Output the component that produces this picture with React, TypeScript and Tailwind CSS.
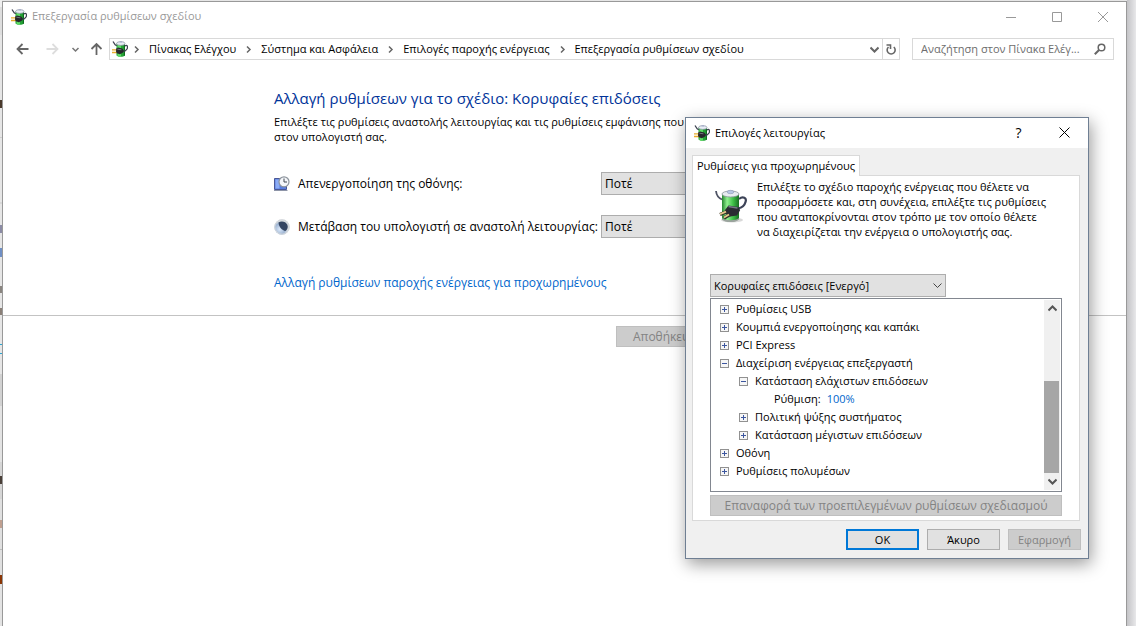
import type { ReactNode } from "react";

type TreeNode = {
  label: string;
  open?: boolean;
  value?: string;
  children?: TreeNode[];
};

const crumbs = [
  "Πίνακας Ελέγχου",
  "Σύστημα και Ασφάλεια",
  "Επιλογές παροχής ενέργειας",
  "Επεξεργασία ρυθμίσεων σχεδίου",
];

const settings: TreeNode[] = [
  { label: "Ρυθμίσεις USB" },
  { label: "Κουμπιά ενεργοποίησης και καπάκι" },
  { label: "PCI Express" },
  {
    label: "Διαχείριση ενέργειας επεξεργαστή",
    open: true,
    children: [
      {
        label: "Κατάσταση ελάχιστων επιδόσεων",
        open: true,
        children: [{ label: "Ρύθμιση:", value: "100%" }],
      },
      { label: "Πολιτική ψύξης συστήματος" },
      { label: "Κατάσταση μέγιστων επιδόσεων" },
    ],
  },
  { label: "Οθόνη" },
  { label: "Ρυθμίσεις πολυμέσων" },
];

// slices of the page that sticks out behind the window
const backdrop = [
  "h-[7px] bg-[#efefef]",
  "h-[28px] bg-[#dedede]",
  "h-[65px] bg-[#e6e6e6]",
  "h-[8px] bg-[#4a3a2c]",
  "h-[29px] bg-[#e6e6e6]",
  "h-px bg-[#cfcfcf]",
  "h-[64px] bg-[#e6e6e6]",
  "h-[2px] bg-[#d8d8d8]",
  "h-[21px] bg-[#e6e6e6]",
  "h-[8px] bg-[#8b8ba5]",
  "h-[15px] bg-[#e6e6e6]",
  "h-[9px] bg-[#6f8fc4]",
  "h-[29px] bg-[#e6e6e6]",
  "h-[7px] bg-[#8a8580]",
  "h-[15px] bg-[#e6e6e6]",
  "h-[7px] bg-[#8a8078]",
  "h-[29px] bg-[#e6e6e6]",
  "h-px bg-[#2ba5d0]",
  "h-[8px] bg-[#e6e6e6]",
  "h-px bg-[#2ba5d0]",
  "h-[20px] bg-[#e6e6e6]",
  "h-[32px] bg-[#d2d2d2]",
  "h-[56px] bg-[#e3e3e3]",
  "h-[14px] bg-[#d6d6d6]",
  "h-[8px] bg-[#4a3f38]",
  "h-[15px] bg-[#d6d6d6]",
  "h-[21px] bg-[#e0e0e0]",
  "h-[8px] bg-[#c0a090]",
  "h-[21px] bg-[#e0e0e0]",
  "h-px bg-[#bdbdbd]",
  "h-[25px] bg-[#e0e0e0]",
  "h-[9px] bg-[#8a3505]",
  "flex-1 bg-[#e3e3e3]",
];

function PowerIcon() {
  return (
    <svg className="size-4 shrink-0" viewBox="0 0 16 16" aria-hidden="true">
      <path d="M4.500 2.500v12c1.800 1.800 7 1.800 8.500 0v-12z" fill="#25a336" />
      <path d="M5.500 3v12c1 .7 2.400.8 3.400.8V3z" fill="#5fdc66" />
      <path d="M11.800 4v11l1.200-.6V3z" fill="#0f6b1e" />
      <ellipse cx="8.800" cy="2.500" rx="4.200" ry="1.900" fill="#e8edf5" stroke="#7b8296" strokeWidth=".6" />
      <path d="M7.600.9h2.400" stroke="#a5aecb" strokeWidth="1.200" />
      <path d="M1 .5 3.200 3.800l1.600 1M12.800 5C15 3.400 16.200 5.500 15 8c-.8 1.400-2 2.200-4 2.500" fill="none" stroke="#3c4150" strokeWidth="1.300" />
      <path d="M4 7.800 6.200 6.600l4 .8 1.600 2-1 2.400-3 1.400L4 12z" fill="#25262b" />
      <path d="m5.400 8.200 4 .6" stroke="#777c86" strokeWidth=".9" />
      <path d="M0 8.900h4.200M0 11.500h4.400" stroke="#e8ad2b" strokeWidth="1.300" />
    </svg>
  );
}

function BatteryIcon() {
  return (
    <svg className="h-9 w-8 shrink-0" viewBox="0 0 32 36" aria-hidden="true">
      <defs>
        <linearGradient id="cell">
          <stop offset="0" stopColor="#24852f" />
          <stop offset=".3" stopColor="#91f090" />
          <stop offset=".65" stopColor="#3fc148" />
          <stop offset="1" stopColor="#176f22" />
        </linearGradient>
      </defs>
      <ellipse cx="17" cy="32" rx="11" ry="2.5" fill="#d9d9d9" />
      <path d="M7 6v25c2.500 3.400 14.500 3.400 17 0V6z" fill="url(#cell)" />
      <path d="M7 30v1.500c2.500 3.400 14.500 3.400 17 0V30c-3 3-14 3-17 0z" fill="#9ca39f" />
      <ellipse cx="15.500" cy="6" rx="8.500" ry="3" fill="#e7ebef" stroke="#8c949c" strokeWidth=".8" />
      <ellipse cx="15.500" cy="4" rx="3.400" ry="1.700" fill="#b8c6e4" stroke="#7f8cab" strokeWidth=".5" />
      <path d="M1 3c.5 5 2.500 7 6 8.500" fill="none" stroke="#4e5364" strokeWidth="1.800" />
      <path d="M24 11c4-3.200 8-1 6.500 3-1 4-3.900 5.800-7.500 6.500" fill="none" stroke="#3d4358" strokeWidth="2.200" />
      <path d="m10 22 3.500-4.500 9.500 1.500 2.200 3-3.200 5.500-7 1-5-3z" fill="#2b2c33" />
      <path d="m13.500 18.500 9 1.500" stroke="#757986" strokeWidth="1.400" />
      <path d="m5 26.500 7-3M9 30l6-3.500" stroke="#34302b" strokeWidth="3.400" />
      <path d="m5 26.200 6-2.600M9 29.600l5-3" stroke="#e6c98a" strokeWidth="1.800" />
    </svg>
  );
}

function DisplayIcon() {
  return (
    <svg className="size-4 shrink-0" viewBox="0 0 16 16" aria-hidden="true">
      <path d="M.5 2.500h12v11H.5z" fill="#5a7fe0" stroke="#4a5796" />
      <path d="M1.500 3.500h4v9h-4z" fill="#8cacf5" />
      <path d="M0 14.500h13.500" stroke="#8e95a8" />
      <circle cx="10" cy="5.800" r="5" fill="#f5f7fa" stroke="#8d949d" strokeWidth="1.200" />
      <path d="M10 2.500v3.500h3" fill="none" stroke="#3f4650" />
    </svg>
  );
}

function SleepIcon() {
  return (
    <svg className="size-4 shrink-0" viewBox="0 0 16 16" aria-hidden="true">
      <defs>
        <radialGradient id="moon" cx=".35" cy=".65">
          <stop offset="0" stopColor="#dbe9fa" />
          <stop offset=".7" stopColor="#9fb5d3" />
          <stop offset="1" stopColor="#d5dade" />
        </radialGradient>
      </defs>
      <circle cx="8" cy="8" r="7.700" fill="url(#moon)" />
      <circle cx="8" cy="8" r="7.200" fill="none" stroke="#d4d8dc" />
      <path d="M4.500 3.500c3-2 7.500-.8 8.800 2.300 1 2.500.2 5-1.800 6.200-3.500-.6-6.600-4-7-8.500z" fill="#344562" />
    </svg>
  );
}

function Chevron({ d, className }: { d: string; className: string }) {
  return (
    <svg className={`size-[9px] shrink-0 ${className}`} viewBox="0 0 9 9" fill="none" stroke="currentColor" aria-hidden="true">
      <path d={d} />
    </svg>
  );
}

const DOWN = "M.5 2.500 4.500 6.500 8.500 2.500";

function ArrowIcon({ className }: { className: string }) {
  return (
    <svg className={`h-3 w-[13px] ${className}`} viewBox="0 0 13 12" fill="none" stroke="currentColor" strokeWidth="1.800" aria-hidden="true">
      <path d="M12.500 6H1.500M6.500 1l-5 5 5 5" />
    </svg>
  );
}

function TitleBar() {
  return (
    <header className="flex h-[29px] items-center pl-2">
      <PowerIcon />
      <h1 className="flex-1 pl-[5px] text-[11px] text-[#999]">Επεξεργασία ρυθμίσεων σχεδίου</h1>
      <div className="flex text-[#999]">
        {[
          ["Ελαχιστοποίηση", "M0 5.500h10"],
          ["Μεγιστοποίηση", "M.5.5h9v9h-9z"],
          ["Κλείσιμο", "m0 0 10 10M10 0 0 10"],
        ].map(([label, d]) => (
          <button key={label} type="button" aria-label={label} className="flex h-7 w-[46px] items-center justify-center">
            <svg className="size-[10px]" viewBox="0 0 10 10" fill="none" stroke="currentColor">
              <path d={d} />
            </svg>
          </button>
        ))}
      </div>
    </header>
  );
}

function AddressBar() {
  return (
    <nav className="flex h-[36px] items-center pr-3 pl-[13px] text-[11px]">
      <button type="button" aria-label="Πίσω" className="text-[#666]">
        <ArrowIcon className="" />
      </button>
      <button type="button" aria-label="Εμπρός" className="ml-[17px] text-[#ddd]">
        <ArrowIcon className="rotate-180" />
      </button>
      <button type="button" aria-label="Πρόσφατες θέσεις" className="ml-3 text-[#777]">
        <Chevron d="M1.500 3 4.500 6 7.500 3" className="stroke-[1.5]" />
      </button>
      <button type="button" aria-label="Επάνω" className="ml-[10px] text-[#666]">
        <ArrowIcon className="rotate-90" />
      </button>
      <div className="ml-[6px] flex h-[22px] flex-1 items-center border border-[#d9d9d9] pl-[2px]">
        <PowerIcon />
        <ol className="-ml-1 flex flex-1 items-center">
          {crumbs.map((crumb) => (
            <li key={crumb} className="flex items-center">
              <Chevron d="M3 1.500 6 4.500 3 7.500" className="mx-2 stroke-[1.5] text-[#666]" />
              <a href="#" className="text-black">{crumb}</a>
            </li>
          ))}
        </ol>
        <button type="button" aria-label="Προηγούμενες θέσεις" className="mr-[3px] text-[#666]">
          <Chevron d={DOWN} className="stroke-2" />
        </button>
        <button type="button" aria-label="Ανανέωση" className="flex h-5 w-[17px] items-center justify-center border-l border-[#d9d9d9] text-[#666]">
          <svg className="h-[11px] w-[10px]" viewBox="0 0 10 11" fill="none" stroke="currentColor" strokeWidth="1.600">
            <path d="M2.500 3A4 4 0 1 0 7.800 3M.5 1h4v4" />
          </svg>
        </button>
      </div>
      <label className="ml-3 flex h-[22px] w-[202px] items-center border border-[#d9d9d9] pr-[7px] pl-2">
        <input
          type="text"
          aria-label="Αναζήτηση"
          placeholder="Αναζήτηση στον Πίνακα Ελέγ..."
          className="min-w-0 flex-1 outline-none placeholder:text-[#6d6d6d]"
        />
        <svg className="size-3" viewBox="0 0 12 12" fill="none" stroke="#666" aria-hidden="true">
          <circle cx="7.500" cy="4.500" r="3.300" strokeWidth="1.500" />
          <path d="M5 7 .8 11.200" strokeWidth="2" />
        </svg>
      </label>
    </nav>
  );
}

function SettingRow({ id, icon, label }: { id: string; icon: ReactNode; label: string }) {
  return (
    <div className="flex h-[23px] items-center text-[12px]">
      {icon}
      <label htmlFor={id} className="w-[311px] pl-2 whitespace-nowrap">
        {label}
      </label>
      <select id={id} className="h-[23px] w-[160px] appearance-none border border-[#adadad] bg-[#e1e1e1] px-[3px]">
        <option>Ποτέ</option>
      </select>
    </div>
  );
}

function PlanSettings() {
  return (
    <main className="text-[11px] leading-[15px] text-black">
      <section className="flex h-[248px] flex-col pt-[19px] pl-[271px]">
        <h2 className="text-[15px] leading-6 text-[#003399]">
          Αλλαγή ρυθμίσεων για το σχέδιο: Κορυφαίες επιδόσεις
        </h2>
        <p className="mt-1 whitespace-nowrap">
          Επιλέξτε τις ρυθμίσεις αναστολής λειτουργίας και τις ρυθμίσεις εμφάνισης που
          <br />
          στον υπολογιστή σας.
        </p>
        <div className="mt-7 flex flex-col gap-5">
          <SettingRow id="display-off" icon={<DisplayIcon />} label="Απενεργοποίηση της οθόνης:" />
          <SettingRow id="sleep" icon={<SleepIcon />} label="Μετάβαση του υπολογιστή σε αναστολή λειτουργίας:" />
        </div>
        <a href="#" className="mt-[37px] text-[12px] text-[#0066cc]">
          Αλλαγή ρυθμίσεων παροχής ενέργειας για προχωρημένους
        </a>
      </section>
      <footer className="flex border-t border-[#c3c3c3] pt-[10px] pl-[613px]">
        <button type="button" disabled className="h-[21px] border border-[#bfbfbf] bg-[#ccc] px-4 text-[12px] text-[#838383]">
          Αποθήκευση αλλαγών
        </button>
      </footer>
    </main>
  );
}

function TreeRows({ nodes }: { nodes: TreeNode[] }) {
  return (
    <ul>
      {nodes.map((node) => (
        <li key={node.label}>
          <div className="flex h-[18px] items-center">
            {node.value ? (
              <span className="flex gap-[6px] pl-4">
                {node.label}
                <a href="#" className="text-[#0066cc]">{node.value}</a>
              </span>
            ) : (
              <>
                <button
                  type="button"
                  aria-label={node.label}
                  aria-expanded={!!node.open}
                  className="mt-[3px] mr-[7px] size-[9px] shrink-0 border border-[#919191] bg-[#f6f6f6]"
                >
                  <svg className="size-[7px]" viewBox="0 0 7 7" stroke="#3c569f">
                    <path d={node.open ? "M1 3.500h5" : "M1 3.500h5M3.500 1v5"} />
                  </svg>
                </button>
                <span>{node.label}</span>
              </>
            )}
          </div>
          {node.children && (
            <div className="pl-[19px]">
              <TreeRows nodes={node.children} />
            </div>
          )}
        </li>
      ))}
    </ul>
  );
}

function PowerDialog() {
  return (
    <div
      role="dialog"
      aria-labelledby="dialog-title"
      className="absolute top-[117px] left-[685px] w-[404px] border border-[#6f7f93] bg-[#f0f0f0] text-[11px] leading-[15px] text-black shadow-[2px_5px_16px_rgba(0,0,0,0.4)]"
    >
      <header className="flex h-[30px] items-center bg-white pr-px pb-px pl-2">
        <PowerIcon />
        <h2 id="dialog-title" className="flex-1 pl-[5px]">Επιλογές λειτουργίας</h2>
        <button type="button" aria-label="Βοήθεια" className="h-7 w-[45px] text-[14px]">
          ?
        </button>
        <button type="button" aria-label="Κλείσιμο" className="flex h-7 w-[46px] items-center justify-center">
          <svg className="size-[11px]" viewBox="0 0 11 11" stroke="#000">
            <path d="m.5.5 10 10m0-10-10 10" />
          </svg>
        </button>
      </header>

      <div className="px-[6px] pt-[7px] pb-2">
        <div role="tablist" className="flex">
          <button
            type="button"
            role="tab"
            aria-selected="true"
            className="z-10 -mb-px h-[21px] w-[168px] border border-b-0 border-[#d9d9d9] bg-white pb-[2px] whitespace-nowrap"
          >
            Ρυθμίσεις για προχωρημένους
          </button>
        </div>
        <div role="tabpanel" className="mr-[2px] border border-[#d9d9d9] bg-white pr-[17px] pb-1 pl-[17px]">
          <div className="flex gap-[10px] pt-[3px] pl-[5px]">
            <div className="pt-[9px]">
              <BatteryIcon />
            </div>
            <p className="-mr-2 whitespace-nowrap">
              Επιλέξτε το σχέδιο παροχής ενέργειας που θέλετε να
              <br />
              προσαρμόσετε και, στη συνέχεια, επιλέξτε τις ρυθμίσεις
              <br />
              που ανταποκρίνονται στον τρόπο με τον οποίο θέλετε
              <br />
              να διαχειρίζεται την ενέργεια ο υπολογιστής σας.
            </p>
          </div>

          <div className="relative mt-[35px] w-[236px]">
            <select
              aria-label="Σχέδιο παροχής ενέργειας"
              className="block h-[23px] w-full appearance-none border border-[#adadad] bg-[#e1e1e1] px-[3px]"
            >
              <option>Κορυφαίες επιδόσεις [Ενεργό]</option>
            </select>
            <Chevron d={DOWN} className="pointer-events-none absolute top-[7px] right-1 text-[#444]" />
          </div>

          <div className="mt-px flex h-[194px] border border-[#828790]">
            <div className="flex-1 pl-[9px]">
              <TreeRows nodes={settings} />
            </div>
            <div className="my-px mr-px flex w-4 flex-col items-center bg-[#f0f0f0] text-[#555]">
              <button type="button" aria-label="Κύλιση επάνω" className="flex h-[17px] items-center">
                <Chevron d="M.5 6.500 4.500 2.500 8.500 6.500" className="stroke-2" />
              </button>
              <div className="flex w-full flex-1 flex-col justify-end">
                <div className="h-[92px] w-[15px] bg-[#a6a6a6]" />
              </div>
              <button type="button" aria-label="Κύλιση κάτω" className="flex h-[17px] items-center">
                <Chevron d={DOWN} className="stroke-2" />
              </button>
            </div>
          </div>

          <button type="button" disabled className="mt-[3px] h-[21px] w-full border border-[#bfbfbf] bg-[#ccc] text-[12px] text-[#838383]">
            Επαναφορά των προεπιλεγμένων ρυθμίσεων σχεδιασμού
          </button>
        </div>

        <div className="mt-2 mr-px flex justify-end gap-2">
          <button type="button" className="h-[21px] w-[73px] border-2 border-[#0078d7] bg-[#e1e1e1] leading-none">
            OK
          </button>
          <button type="button" className="h-[21px] w-[73px] border border-[#adadad] bg-[#e1e1e1]">
            Άκυρο
          </button>
          <button type="button" disabled className="h-[21px] w-[73px] border border-[#bfbfbf] bg-[#ccc] text-[#838383]">
            Εφαρμογή
          </button>
        </div>
      </div>
    </div>
  );
}

export default function App() {
  return (
    <div className="relative flex min-h-screen overflow-hidden bg-[#e6e6e6] font-['Open_Sans','Noto_Sans',sans-serif]">
      <div className="flex w-[2px] flex-col">
        {backdrop.map((slice, i) => (
          <div key={i} className={slice} />
        ))}
      </div>
      <div className="mt-px min-w-0 flex-1 border border-b-0 border-[#999] bg-white">
        <TitleBar />
        <AddressBar />
        <PlanSettings />
      </div>
      <div className="w-[9px] bg-linear-to-r from-[#c4c4c7] to-[#e8e8ea]" />
      <PowerDialog />
    </div>
  );
}
